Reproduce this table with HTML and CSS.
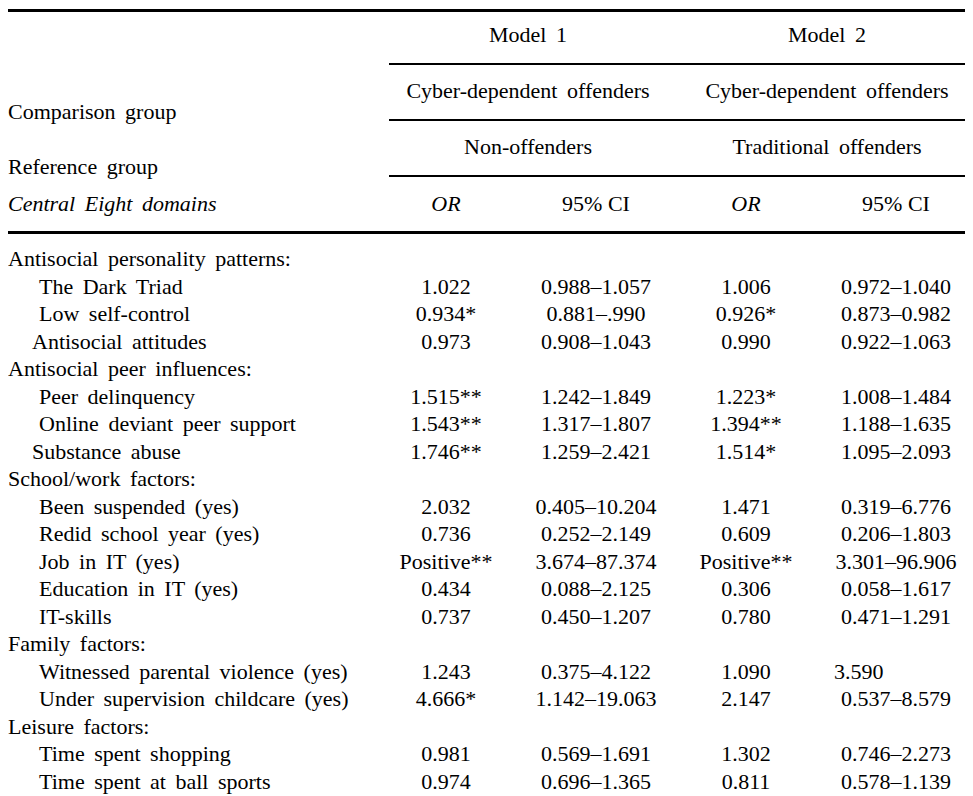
FILE: index.html
```html
<!DOCTYPE html>
<html lang="en">
<head>
<meta charset="utf-8">
<title>Odds ratios – Central Eight domains</title>
<link rel="stylesheet" href="styles.css">
</head>
<body>
<table class="results">
  <colgroup>
    <col class="c-label">
    <col class="c-or">
    <col class="c-ci">
    <col class="c-or">
    <col class="c-ci2">
  </colgroup>
  <thead>
    <tr class="h-model">
      <th class="lbl"></th>
      <th class="grp grp1" colspan="2">Model 1</th>
      <th class="grp grp2" colspan="2">Model 2</th>
    </tr>
    <tr class="h-comp">
      <th class="lbl lbl-low">Comparison group</th>
      <th class="grp grp1" colspan="2">Cyber-dependent offenders</th>
      <th class="grp grp2" colspan="2">Cyber-dependent offenders</th>
    </tr>
    <tr class="h-ref">
      <th class="lbl lbl-low">Reference group</th>
      <th class="grp grp1" colspan="2">Non-offenders</th>
      <th class="grp grp2" colspan="2">Traditional offenders</th>
    </tr>
    <tr class="h-cols">
      <th class="lbl it">Central Eight domains</th>
      <th class="num it">OR</th>
      <th class="num">95% CI</th>
      <th class="num it">OR</th>
      <th class="num ci2">95% CI</th>
    </tr>
  </thead>
  <tbody>
    <tr class="cat first"><td colspan="5">Antisocial personality patterns:</td></tr>
    <tr><td class="sub">The Dark Triad</td><td class="num">1.022</td><td class="num">0.988–1.057</td><td class="num">1.006</td><td class="num ci2">0.972–1.040</td></tr>
    <tr><td class="sub">Low self-control</td><td class="num">0.934*</td><td class="num">0.881–.990</td><td class="num">0.926*</td><td class="num ci2">0.873–0.982</td></tr>
    <tr><td class="sub sub-s">Antisocial attitudes</td><td class="num">0.973</td><td class="num">0.908–1.043</td><td class="num">0.990</td><td class="num ci2">0.922–1.063</td></tr>
    <tr class="cat"><td colspan="5">Antisocial peer influences:</td></tr>
    <tr><td class="sub">Peer delinquency</td><td class="num">1.515**</td><td class="num">1.242–1.849</td><td class="num">1.223*</td><td class="num ci2">1.008–1.484</td></tr>
    <tr><td class="sub">Online deviant peer support</td><td class="num">1.543**</td><td class="num">1.317–1.807</td><td class="num">1.394**</td><td class="num ci2">1.188–1.635</td></tr>
    <tr><td class="sub sub-s">Substance abuse</td><td class="num">1.746**</td><td class="num">1.259–2.421</td><td class="num">1.514*</td><td class="num ci2">1.095–2.093</td></tr>
    <tr class="cat"><td colspan="5">School/work factors:</td></tr>
    <tr><td class="sub">Been suspended (yes)</td><td class="num">2.032</td><td class="num">0.405–10.204</td><td class="num">1.471</td><td class="num ci2">0.319–6.776</td></tr>
    <tr><td class="sub">Redid school year (yes)</td><td class="num">0.736</td><td class="num">0.252–2.149</td><td class="num">0.609</td><td class="num ci2">0.206–1.803</td></tr>
    <tr><td class="sub">Job in IT (yes)</td><td class="num">Positive**</td><td class="num">3.674–87.374</td><td class="num">Positive**</td><td class="num ci2">3.301–96.906</td></tr>
    <tr><td class="sub">Education in IT (yes)</td><td class="num">0.434</td><td class="num">0.088–2.125</td><td class="num">0.306</td><td class="num ci2">0.058–1.617</td></tr>
    <tr><td class="sub">IT-skills</td><td class="num">0.737</td><td class="num">0.450–1.207</td><td class="num">0.780</td><td class="num ci2">0.471–1.291</td></tr>
    <tr class="cat"><td colspan="5">Family factors:</td></tr>
    <tr><td class="sub">Witnessed parental violence (yes)</td><td class="num">1.243</td><td class="num">0.375–4.122</td><td class="num">1.090</td><td class="ci2-left">3.590</td></tr>
    <tr><td class="sub">Under supervision childcare (yes)</td><td class="num">4.666*</td><td class="num">1.142–19.063</td><td class="num">2.147</td><td class="num ci2">0.537–8.579</td></tr>
    <tr class="cat"><td colspan="5">Leisure factors:</td></tr>
    <tr><td class="sub">Time spent shopping</td><td class="num">0.981</td><td class="num">0.569–1.691</td><td class="num">1.302</td><td class="num ci2">0.746–2.273</td></tr>
    <tr><td class="sub">Time spent at ball sports</td><td class="num">0.974</td><td class="num">0.696–1.365</td><td class="num">0.811</td><td class="num ci2">0.578–1.139</td></tr>
  </tbody>
</table>
</body>
</html>
```

FILE: styles.css
```css
html, body {
  background: #ffffff;
}
body {
  margin: 9px 8px 0 8px;
  font-family: "Liberation Serif", "Times New Roman", serif;
  font-size: 22px;
  color: #000000;
}
.results {
  width: 957px;
  table-layout: fixed;
  border-collapse: collapse;
  border-top: 3px solid #000;
}
.c-label { width: 381px; }
.c-or { width: 114px; }
.c-ci { width: 186px; }
.c-ci2 { width: 162px; }

.results th,
.results td {
  padding: 0;
  font-weight: normal;
  line-height: 27.5px;
  white-space: nowrap;
  word-spacing: 4px;
}
.results th { vertical-align: middle; }

.results .h-model th { height: 53px; padding-bottom: 6px; box-sizing: border-box; }
.results .h-comp th { height: 56px; padding-bottom: 1px; box-sizing: border-box; }
.results .h-ref th { height: 56px; padding-bottom: 2px; box-sizing: border-box; }
.results .h-cols th { height: 57px; padding-bottom: 0; box-sizing: border-box; border-bottom: 3px solid #000; }

.results .grp {
  text-align: center;
  border-bottom: 2px solid #000;
}
.results .grp1 { padding-right: 22px; }

.results .lbl { text-align: left; }
.results .lbl-low {
  vertical-align: bottom;
  line-height: 14px;
  padding-bottom: 0;
}
.it { font-style: italic; }

.results .num { text-align: center; word-spacing: 0; }
.results .ci2 { padding-left: 24px; }
.results .ci2-left { text-align: left; padding-left: 31px; }

.results .cat td { text-align: left; }
.results .first td { padding-top: 11px; }
.results .sub { padding-left: 31px; }
.results .sub-s { padding-left: 24px; }
```
